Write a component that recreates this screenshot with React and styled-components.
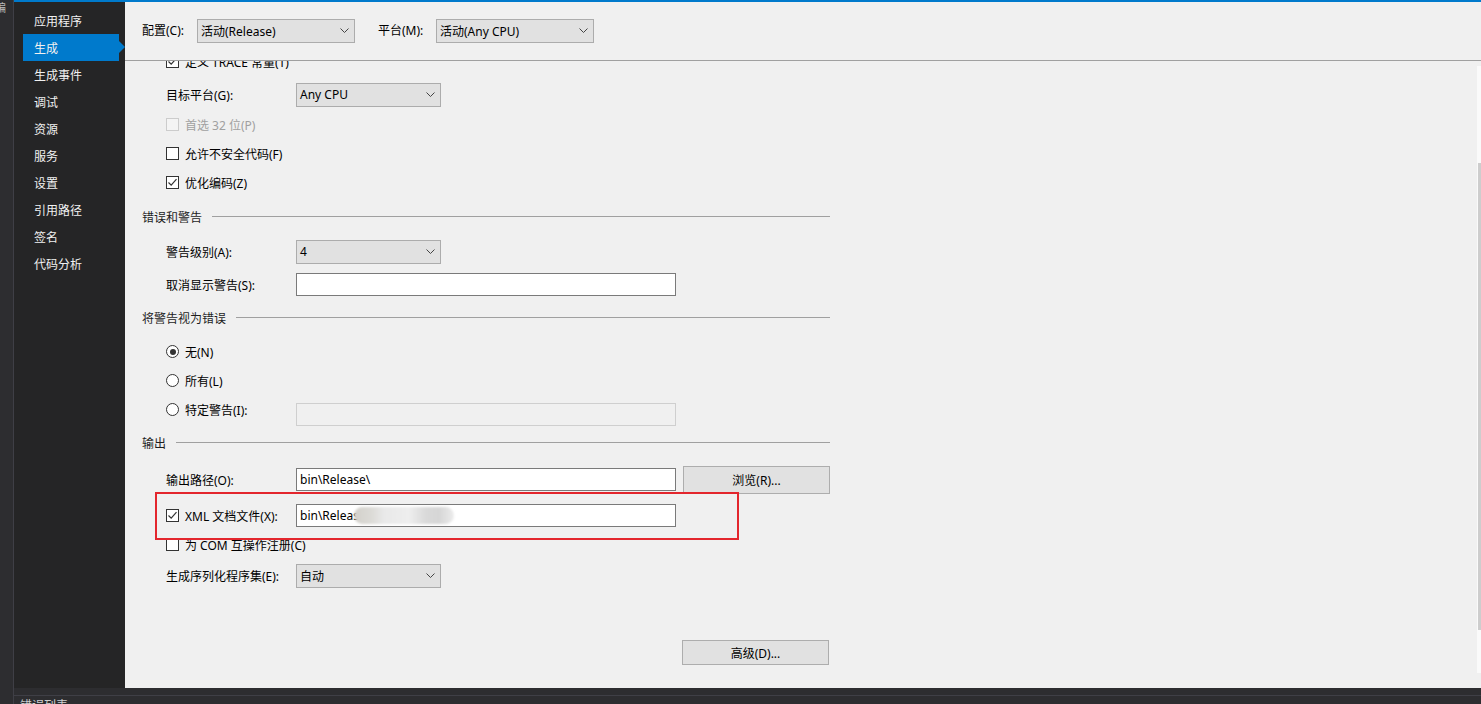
import React from "react";
import styled, { createGlobalStyle } from "styled-components";

const GlobalStyle = createGlobalStyle`
  * { box-sizing: border-box; }
  html, body { margin: 0; padding: 0; }
  body {
    width: 1481px;
    height: 704px;
    overflow: hidden;
    background: #2d2d30;
    font-family: "Segoe UI", "Noto Sans", "Noto Sans CJK SC", sans-serif;
    font-size: 12px;
    color: #000;
  }
`;

const navItems = ["应用程序", "生成", "生成事件", "调试", "资源", "服务", "设置", "引用路径", "签名", "代码分析"];

const Chevron = () => (
  <svg width="9" height="6" viewBox="0 0 9 6">
    <polyline points="0.5,0.5 4.5,4.5 8.5,0.5" fill="none" stroke="#444" strokeWidth="1" />
  </svg>
);

const Check = () => (
  <svg width="11" height="11" viewBox="0 0 11 11">
    <polyline points="1.5,5.5 4.2,8.2 9.5,2.2" fill="none" stroke="#333" strokeWidth="1.2" />
  </svg>
);

const App = () => {
  return (
    <Shell>
      <GlobalStyle />
      <LeftStrip>
        <StripGlyph>编</StripGlyph>
      </LeftStrip>
      <Main>
        <AccentBar />
        <Body>
          <Sidebar>
            {navItems.map((item) => (
              <NavItem key={item} $active={item === "生成"}>
                {item}
              </NavItem>
            ))}
          </Sidebar>
          <Content>
            <Header>
              <HeadLabel $w={55}>配置(C):</HeadLabel>
              <Select $w={158}>
                <span>活动(Release)</span>
                <Chevron />
              </Select>
              <HeadLabel $w={58} $ml={23}>
                平台(M):
              </HeadLabel>
              <Select $w={158}>
                <span>活动(Any CPU)</span>
                <Chevron />
              </Select>
            </Header>
            <Divider />
            <ScrollArea>
              <Form>
                <Inner>
                  <Row $indent>
                    <CheckBox>
                      <Check />
                    </CheckBox>
                    <CheckText>定义 TRACE 常量(T)</CheckText>
                  </Row>
                  <Row $indent $mt={4}>
                    <FieldLabel>目标平台(G):</FieldLabel>
                    <Select $w={145}>
                      <span>Any CPU</span>
                      <Chevron />
                    </Select>
                  </Row>
                  <Row $indent $mt={1}>
                    <CheckBox $disabled />
                    <CheckText $disabled>首选 32 位(P)</CheckText>
                  </Row>
                  <Row $indent>
                    <CheckBox />
                    <CheckText>允许不安全代码(F)</CheckText>
                  </Row>
                  <Row $indent>
                    <CheckBox>
                      <Check />
                    </CheckBox>
                    <CheckText>优化编码(Z)</CheckText>
                  </Row>

                  <Section $mt={5}>
                    <SectionTitle>错误和警告</SectionTitle>
                    <SectionLine />
                  </Section>
                  <Row $indent $mt={6}>
                    <FieldLabel>警告级别(A):</FieldLabel>
                    <Select $w={145}>
                      <span>4</span>
                      <Chevron />
                    </Select>
                  </Row>
                  <Row $indent $mt={4}>
                    <FieldLabel>取消显示警告(S):</FieldLabel>
                    <TextBox />
                  </Row>

                  <Section $mt={4}>
                    <SectionTitle>将警告视为错误</SectionTitle>
                    <SectionLine />
                  </Section>
                  <Row $indent $mt={5}>
                    <Radio $checked />
                    <CheckText>无(N)</CheckText>
                  </Row>
                  <Row $indent>
                    <Radio />
                    <CheckText>所有(L)</CheckText>
                  </Row>
                  <Row $indent>
                    <Radio />
                    <CheckText $w={111}>特定警告(I):</CheckText>
                    <TextBox $disabled $shift={9} />
                  </Row>

                  <Section $mt={4}>
                    <SectionTitle>输出</SectionTitle>
                    <SectionLine />
                  </Section>
                  <Row $indent $mt={8}>
                    <FieldLabel>输出路径(O):</FieldLabel>
                    <TextBox>{"bin\\Release\\"}</TextBox>
                    <Button $h={28} $ml={7}>
                      浏览(R)...
                    </Button>
                  </Row>
                  <Row $indent $mt={7} $relative>
                    <CheckBox>
                      <Check />
                    </CheckBox>
                    <CheckText $w={111}>XML 文档文件(X):</CheckText>
                    <TextBox>
                      {"bin\\Releas"}
                      <Smudge />
                    </TextBox>
                    <RedBox />
                  </Row>
                  <Row $indent>
                    <CheckBox />
                    <CheckText>为 COM 互操作注册(C)</CheckText>
                  </Row>
                  <Row $indent $mt={2}>
                    <FieldLabel>生成序列化程序集(E):</FieldLabel>
                    <Select $w={145}>
                      <span>自动</span>
                      <Chevron />
                    </Select>
                  </Row>
                  <ActionRow>
                    <Button $h={25}>高级(D)...</Button>
                  </ActionRow>
                </Inner>
              </Form>
              <ScrollTrack>
                <ScrollThumb />
              </ScrollTrack>
            </ScrollArea>
          </Content>
        </Body>
        <BottomBar>
          <PanelTab>错误列表</PanelTab>
        </BottomBar>
      </Main>
    </Shell>
  );
};

export default App;

const Shell = styled.div`
  display: flex;
  width: 1481px;
  height: 704px;
`;

const LeftStrip = styled.div`
  width: 14px;
  flex-shrink: 0;
  background: #2d2d30;
  border-right: 1px solid #3f3f46;
  overflow: hidden;
`;

const StripGlyph = styled.div`
  margin: 1px 0 0 -5px;
  color: #b8b8b8;
  font-size: 11px;
  line-height: 14px;
`;

const Main = styled.div`
  flex: 1;
  min-width: 0;
  display: flex;
  flex-direction: column;
`;

const AccentBar = styled.div`
  height: 2px;
  background: #007acc;
`;

const Body = styled.div`
  height: 686px;
  display: flex;
`;

const Sidebar = styled.div`
  width: 111px;
  flex-shrink: 0;
  background: #252526;
  padding-top: 5px;
`;

const NavItem = styled.div`
  position: relative;
  height: 27px;
  width: 96px;
  margin-left: 9px;
  padding-left: 11px;
  display: flex;
  align-items: center;
  color: #f1f1f1;
  background: ${(p) => (p.$active ? "#007acc" : "transparent")};

  &::after {
    content: "";
    display: ${(p) => (p.$active ? "block" : "none")};
    position: absolute;
    right: -6px;
    top: 7px;
    border-left: 6px solid #007acc;
    border-top: 6px solid transparent;
    border-bottom: 6px solid transparent;
  }
`;

const Content = styled.div`
  flex: 1;
  min-width: 0;
  background: #f0f0f0;
  display: flex;
  flex-direction: column;
`;

const Header = styled.div`
  height: 58px;
  display: flex;
  align-items: flex-start;
  padding: 17px 0 0 17px;
`;

const HeadLabel = styled.div`
  width: ${(p) => p.$w}px;
  margin-left: ${(p) => p.$ml || 0}px;
  line-height: 24px;
`;

const Select = styled.div`
  width: ${(p) => p.$w}px;
  height: 24px;
  flex-shrink: 0;
  display: flex;
  align-items: center;
  justify-content: space-between;
  padding: 0 5px 0 3px;
  background: #e1e1e1;
  border: 1px solid #acacac;
`;

const Divider = styled.div`
  height: 1px;
  background: #a0a0a0;
`;

const ScrollArea = styled.div`
  flex: 1;
  min-height: 0;
  display: flex;
  overflow: hidden;
`;

const Form = styled.div`
  flex: 1;
  padding-left: 17px;
`;

const Inner = styled.div`
  margin-top: -14px;
`;

const Row = styled.div`
  position: ${(p) => (p.$relative ? "relative" : "static")};
  height: 29px;
  display: flex;
  align-items: center;
  margin-top: ${(p) => p.$mt || 0}px;
  padding-left: ${(p) => (p.$indent ? 24 : 0)}px;
`;

const Section = styled.div`
  width: 688px;
  height: 29px;
  display: flex;
  align-items: center;
  margin-top: ${(p) => p.$mt || 0}px;
`;

const SectionTitle = styled.span`
  color: #1e1e1e;
`;

const SectionLine = styled.div`
  flex: 1;
  height: 1px;
  margin-left: 10px;
  background: #a0a0a0;
`;

const FieldLabel = styled.div`
  width: 130px;
  flex-shrink: 0;
`;

const CheckBox = styled.div`
  width: 13px;
  height: 13px;
  flex-shrink: 0;
  display: flex;
  align-items: center;
  justify-content: center;
  background: ${(p) => (p.$disabled ? "#f4f4f4" : "#fff")};
  border: 1px solid ${(p) => (p.$disabled ? "#cccccc" : "#333")};
`;

const Radio = styled.div`
  width: 13px;
  height: 13px;
  flex-shrink: 0;
  border-radius: 50%;
  border: 1px solid #333;
  background: #fff;
  display: flex;
  align-items: center;
  justify-content: center;

  &::after {
    content: "";
    display: ${(p) => (p.$checked ? "block" : "none")};
    width: 6px;
    height: 6px;
    border-radius: 50%;
    background: #333;
  }
`;

const CheckText = styled.span`
  margin-left: 6px;
  width: ${(p) => (p.$w ? `${p.$w}px` : "auto")};
  flex-shrink: 0;
  color: ${(p) => (p.$disabled ? "#a0a0a0" : "#000")};
`;

const TextBox = styled.div`
  width: 380px;
  height: 23px;
  flex-shrink: 0;
  display: flex;
  align-items: center;
  padding-left: 3px;
  margin-top: ${(p) => p.$shift || 0}px;
  background: ${(p) => (p.$disabled ? "#f0f0f0" : "#fff")};
  border: 1px solid ${(p) => (p.$disabled ? "#cfcfcf" : "#7a7a7a")};
  white-space: nowrap;
  overflow: hidden;
`;

const Smudge = styled.span`
  display: inline-block;
  width: 100px;
  height: 17px;
  margin-left: -5px;
  border-radius: 9px;
  background: linear-gradient(
    to right,
    #d3d1cb 0%,
    #dcdbd7 18%,
    #e9e9e9 30%,
    #eeeeee 55%,
    #d9d9d9 72%,
    #d6d6d6 85%,
    #ececec 100%
  );
  filter: blur(1.2px);
`;

const RedBox = styled.div`
  position: absolute;
  left: 13px;
  top: -9px;
  width: 584px;
  height: 48px;
  border: 2px solid #e3262d;
  pointer-events: none;
`;

const Button = styled.div`
  width: 147px;
  height: ${(p) => p.$h}px;
  margin-left: ${(p) => p.$ml || 0}px;
  flex-shrink: 0;
  display: flex;
  align-items: center;
  justify-content: center;
  background: #e1e1e1;
  border: 1px solid #adadad;
`;

const ActionRow = styled.div`
  width: 687px;
  margin-top: 50px;
  display: flex;
  justify-content: flex-end;
`;

const ScrollTrack = styled.div`
  width: 4px;
  flex-shrink: 0;
  margin: 5px 0 15px 0;
  background: #fafafa;
`;

const ScrollThumb = styled.div`
  width: 3px;
  height: 467px;
  margin: 97px 0 0 1px;
  background: #cdcdcd;
`;

const BottomBar = styled.div`
  height: 16px;
  flex-shrink: 0;
  padding-top: 7px;
  background: #2d2d30;
  overflow: hidden;
`;

const PanelTab = styled.div`
  height: 9px;
  border-top: 1px solid #3f3f46;
  padding: 3px 0 0 6px;
  color: #d0d0d0;
  line-height: 14px;
  overflow: hidden;
`;
